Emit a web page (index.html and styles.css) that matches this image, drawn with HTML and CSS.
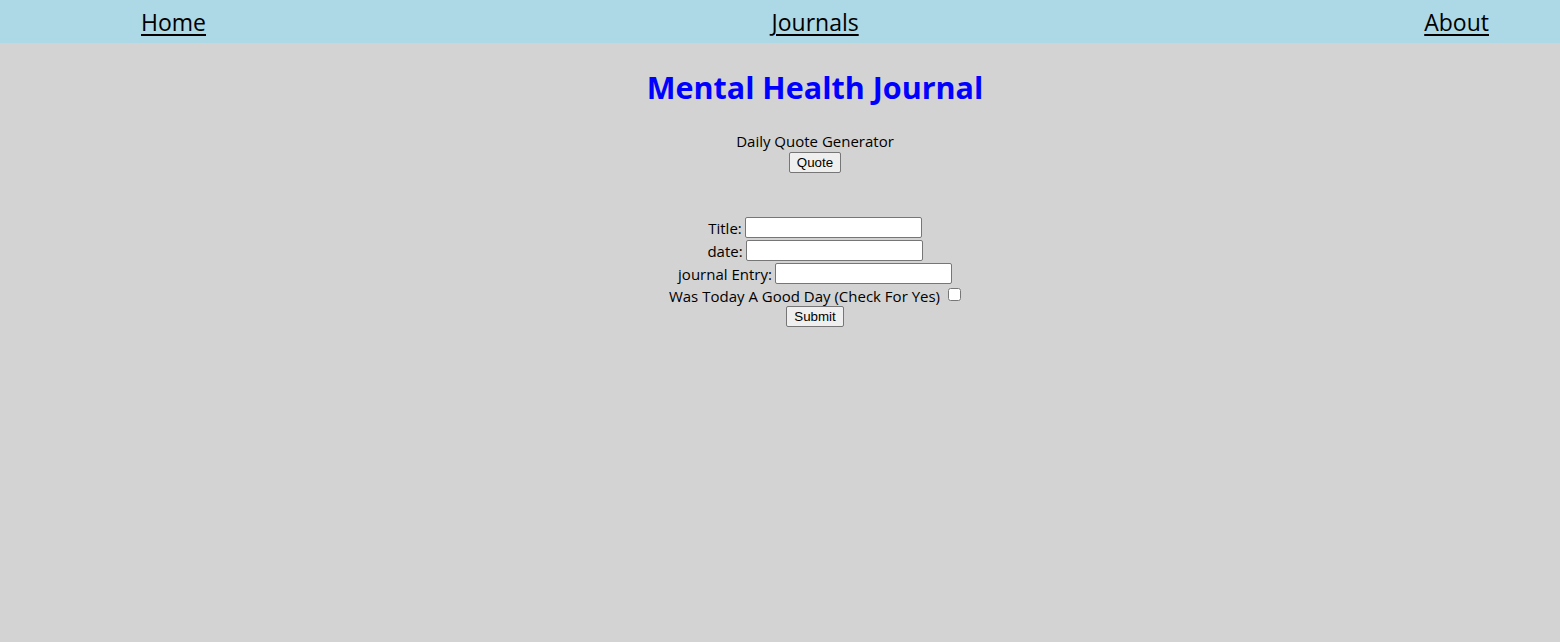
FILE: index.html
```html
<!DOCTYPE html>
<html>
<head>
<meta charset="utf-8">
<title>Mental Health Journal</title>
<link rel="stylesheet" href="styles.css">
</head>
<body>
<nav class="nav">
  <a class="nav-link" href="#">Home</a>
  <a class="nav-link" href="#">Journals</a>
  <a class="nav-link" href="#">About</a>
</nav>
<main class="page">
  <h1 class="title">Mental Health Journal</h1>
  <section class="quote">
    <div class="quote-label">Daily Quote Generator</div>
    <button class="btn" type="button">Quote</button>
  </section>
  <form class="entry-form">
    <div class="row"><label class="lbl">Title:</label><input class="field field-title" type="text"></div>
    <div class="row"><label class="lbl">date:</label><input class="field field-title" type="text"></div>
    <div class="row"><label class="lbl">journal Entry:</label><input class="field field-title" type="text"></div>
    <div class="row row-check"><label class="lbl">Was Today A Good Day (Check For Yes)</label><input class="check" type="checkbox"></div>
    <div class="row row-submit"><button class="btn btn-submit" type="button">Submit</button></div>
  </form>
</main>
</body>
</html>
```
FILE: styles.css
```css
html, body {
  margin: 0;
  padding: 0;
  background: #d3d3d3;
  height: 100%;
}
body {
  font-family: "Open Sans", "Noto Sans", sans-serif;
  color: #000;
}
.nav {
  background: #add8e6;
  height: 43px;
  box-sizing: border-box;
  padding: 2px 71px 0 141px;
  display: flex;
  justify-content: space-between;
  align-items: center;
}
.nav-link {
  color: #000;
  font-size: 23px;
  line-height: 41px;
  text-decoration: underline;
  text-decoration-thickness: 2px;
  text-underline-offset: 3px;
}
.page {
  padding-left: 70px;
  text-align: center;
}
.title {
  margin: 23px 0 22px;
  font-size: 30.5px;
  line-height: 43px;
  font-weight: 700;
  color: #0000ff;
}
.quote {
  display: flex;
  flex-direction: column;
  align-items: center;
}
.quote-label {
  font-size: 15px;
  line-height: 21px;
  height: 21px;
}
.btn {
  font-family: "Liberation Sans", Arial, sans-serif;
  font-size: 13.33px;
  height: 21px;
  padding: 0 7px;
  background: #efefef;
  border: 1px solid #767676;
  border-radius: 2px;
  color: #000;
}
.entry-form {
  margin-top: 43px;
  display: flex;
  flex-direction: column;
  align-items: center;
}
.row {
  display: flex;
  align-items: center;
  justify-content: center;
  height: 23px;
  font-size: 15px;
}
.row-check {
  height: 21px;
}
.row-submit {
  height: 21px;
}
.lbl {
  margin-right: 3px;
}
.field {
  box-sizing: border-box;
  width: 177px;
  height: 21px;
  border: 1px solid #767676;
  border-radius: 2px;
  background: #fff;
  padding: 1px 2px;
  margin: 0;
}
.check {
  width: 13px;
  height: 13px;
  margin: 0 0 2px 5px;
}
```
